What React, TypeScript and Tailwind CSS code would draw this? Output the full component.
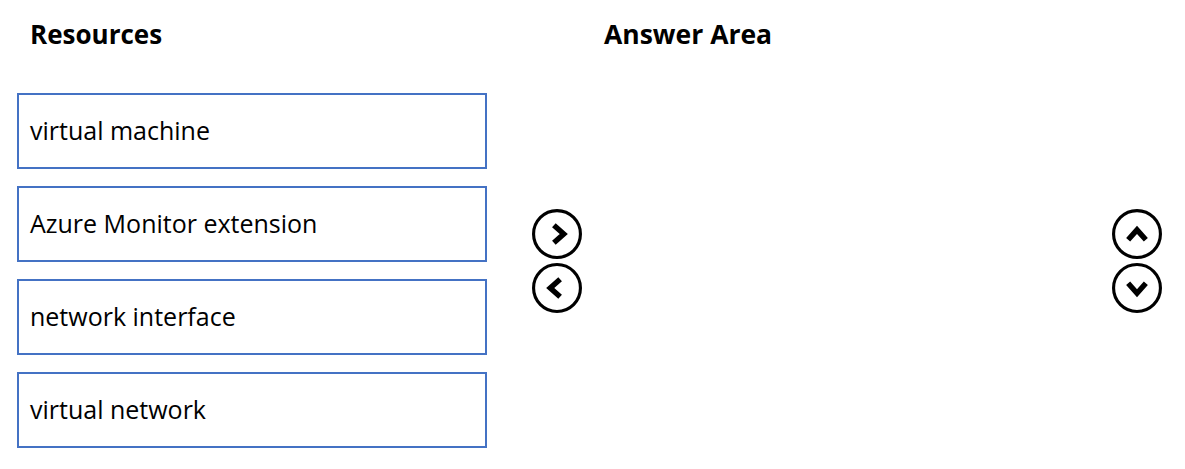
import React from 'react';

const resources = ['virtual machine', 'Azure Monitor extension', 'network interface', 'virtual network'];

type Dir = 'right' | 'left' | 'up' | 'down';

const chevrons: Record<Dir, string> = {
  right: '21,15.5 30.5,24 21,32.5',
  left: '27,15.5 17.5,24 27,32.5',
  up: '15.5,29.5 24,20 32.5,29.5',
  down: '15.5,19.5 24,29 32.5,19.5',
};

const CircleArrow: React.FC<{ dir: Dir }> = ({ dir }) => (
  <svg width="50" height="50" viewBox="0 0 48 48" fill="none">
    <circle cx="24" cy="24" r="22.5" stroke="#000" strokeWidth="3" />
    <polyline points={chevrons[dir]} stroke="#000" strokeWidth="5.2" strokeLinejoin="miter" strokeLinecap="butt" />
  </svg>
);

const App: React.FC = () => {
  return (
    <div className="flex h-[469px] w-[1185px] bg-white pt-[16px] font-['Open_Sans',sans-serif] text-black">
      {/* Resources column */}
      <div className="ml-[17px] w-[470px]">
        <h2 className="pl-[13px] text-[26px] font-bold leading-[36px]">Resources</h2>
        <div className="mt-[41px] flex flex-col gap-[17px]">
          {resources.map((r) => (
            <div
              key={r}
              className="flex h-[76px] items-center border-2 border-[#4472C4] pl-[11px] text-[25px]"
            >
              {r}
            </div>
          ))}
        </div>
      </div>

      {/* Move buttons */}
      <div className="ml-[45px] mt-[193px] flex flex-col gap-[4px]">
        <CircleArrow dir="right" />
        <CircleArrow dir="left" />
      </div>

      {/* Answer area */}
      <div className="ml-[22px] flex-1">
        <h2 className="text-[26.5px] font-bold leading-[36px]">Answer Area</h2>
      </div>

      {/* Reorder buttons */}
      <div className="mr-[23px] mt-[193px] flex flex-col gap-[4px]">
        <CircleArrow dir="up" />
        <CircleArrow dir="down" />
      </div>
    </div>
  );
};

export default App;
